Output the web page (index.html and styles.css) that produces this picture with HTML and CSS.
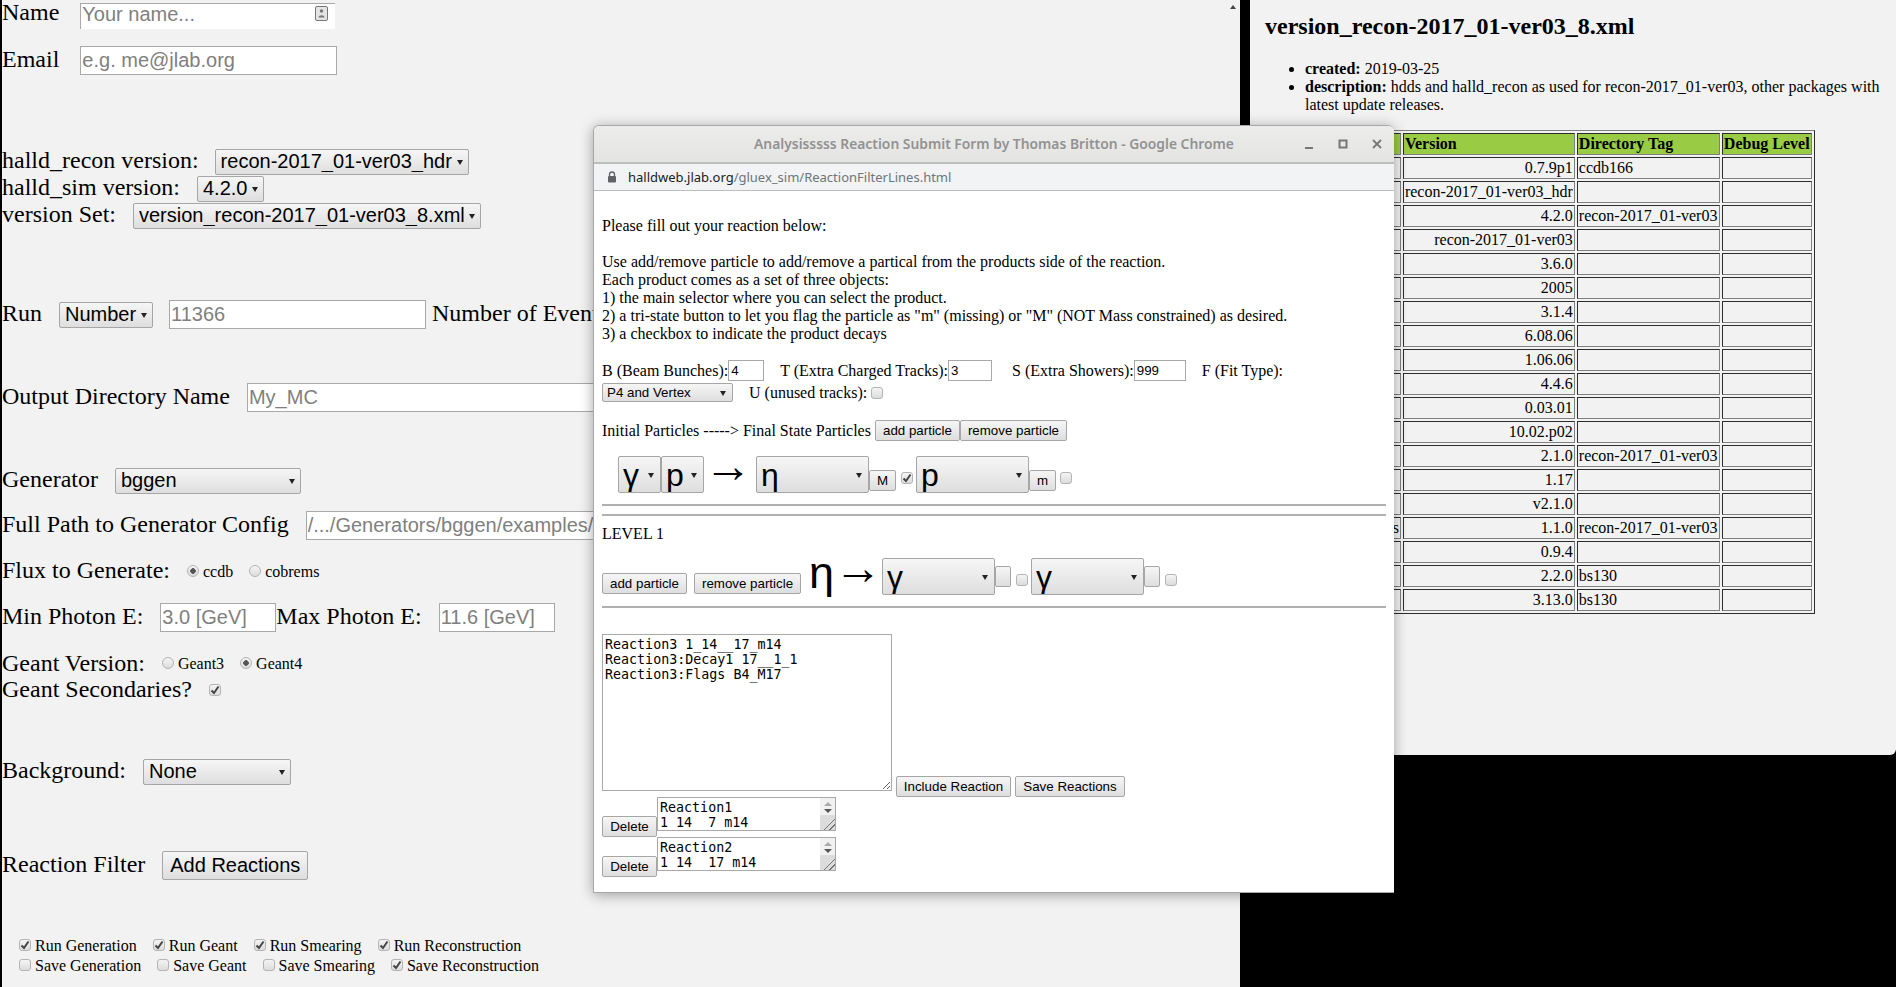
FILE: index.html
```html
<!DOCTYPE html>
<html lang="en">
<head>
    <meta charset="UTF-8">
    <title>MC Submit Form</title>
    <link rel="stylesheet" href="styles.css">
</head>
<body>
    <!-- Main submit form window -->
    <div class="win win-main">
        <div class="row">
            <label>Name&nbsp;&nbsp;&nbsp;</label>
            <div class="name-box ml-4">
                <input class="name-input" type="text" placeholder="Your name...">
                <svg class="contact-icon" width="13" height="15" viewBox="0 0 13 15"><rect x="0.5" y="0.5" width="12" height="14" rx="1.5" fill="#e4e4e4" stroke="#777"/><circle cx="6.5" cy="5" r="1.7" fill="#777"/><path d="M3.5 11.5 C3.5 8.5 9.5 8.5 9.5 11.5 Z" fill="#777"/></svg>
            </div>
        </div>
        <div class="row mt-20">
            <label>Email&nbsp;&nbsp;&nbsp;</label>
            <input class="text w-257 ml-4" type="text" placeholder="e.g. me@jlab.org">
        </div>

        <div class="row row-27 mt-73">
            <label>halld_recon version:&nbsp;&nbsp;&nbsp;</label>
            <select class="sel w-254 tuck"><option>recon-2017_01-ver03_hdr</option></select>
        </div>
        <div class="row row-27">
            <label>halld_sim version:&nbsp;&nbsp;&nbsp;</label>
            <select class="sel w-67"><option>4.2.0</option></select>
        </div>
        <div class="row row-27">
            <label>version Set:&nbsp;&nbsp;&nbsp;</label>
            <select class="sel w-348"><option>version_recon-2017_01-ver03_8.xml</option></select>
        </div>

        <div class="row mt-71">
            <label>Run&nbsp;&nbsp;&nbsp;</label>
            <select class="sel w-94"><option>Number</option></select>
            <input class="text w-257 ml-16" type="text" placeholder="11366">
            <label class="ml-6">Number of Events</label>
        </div>

        <div class="row mt-54">
            <label>Output Directory Name&nbsp;&nbsp;&nbsp;</label>
            <input class="text w-500" type="text" placeholder="My_MC">
        </div>

        <div class="row row-27 mt-55">
            <label>Generator&nbsp;&nbsp;&nbsp;</label>
            <select class="sel w-186"><option>bggen</option></select>
        </div>
        <div class="row mt-17">
            <label>Full Path to Generator Config&nbsp;&nbsp;&nbsp;</label>
            <input class="text w-500" type="text" placeholder="/.../Generators/bggen/examples/">
        </div>
        <div class="row row-27 mt-18">
            <label>Flux to Generate:&nbsp;&nbsp;&nbsp;</label>
            <label class="opt"><input class="radio" type="radio" name="flux" checked>ccdb</label>
            <label class="opt"><input class="radio" type="radio" name="flux">cobrems</label>
        </div>
        <div class="row mt-18">
            <label>Min Photon E:&nbsp;&nbsp;&nbsp;</label>
            <input class="text w-116" type="text" placeholder="3.0 [GeV]">
            <label>Max Photon E:&nbsp;&nbsp;&nbsp;</label>
            <input class="text w-116" type="text" placeholder="11.6 [GeV]">
        </div>
        <div class="row row-26 mt-19">
            <label>Geant Version:&nbsp;&nbsp;&nbsp;</label>
            <label class="opt"><input class="radio" type="radio" name="geant">Geant3</label>
            <label class="opt"><input class="radio" type="radio" name="geant" checked>Geant4</label>
        </div>
        <div class="row row-26">
            <label>Geant Secondaries?&nbsp;&nbsp;&nbsp;</label>
            <input class="check" type="checkbox" checked>
        </div>

        <div class="row row-27 mt-55">
            <label>Background:&nbsp;&nbsp;&nbsp;</label>
            <select class="sel w-148"><option>None</option></select>
        </div>

        <div class="row mt-66">
            <label>Reaction Filter&nbsp;&nbsp;&nbsp;</label>
            <button class="btn-big">Add Reactions</button>
        </div>

        <div class="row row-20 mt-56 ml-17">
            <label class="opt"><input class="check" type="checkbox" checked>Run Generation</label>
            <label class="opt"><input class="check" type="checkbox" checked>Run Geant</label>
            <label class="opt"><input class="check" type="checkbox" checked>Run Smearing</label>
            <label class="opt"><input class="check" type="checkbox" checked>Run Reconstruction</label>
        </div>
        <div class="row row-20 ml-17">
            <label class="opt"><input class="check" type="checkbox">Save Generation</label>
            <label class="opt"><input class="check" type="checkbox">Save Geant</label>
            <label class="opt"><input class="check" type="checkbox">Save Smearing</label>
            <label class="opt"><input class="check" type="checkbox" checked>Save Reconstruction</label>
        </div>
        <div class="scroll-up"></div>
    </div>

    <!-- Version set window -->
    <div class="win win-versions">
        <h2>version_recon-2017_01-ver03_8.xml</h2>
        <ul>
            <li><b>created:</b> 2019-03-25</li>
            <li><b>description:</b> hdds and halld_recon as used for recon-2017_01-ver03, other packages with latest update releases.</li>
        </ul>
        <table class="versions">
            <tr><th>Package</th><th>Version</th><th>Directory Tag</th><th>Debug Level</th></tr>
            <tr><td>jana</td><td class="num">0.7.9p1</td><td>ccdb166</td><td></td></tr>
            <tr><td>halld_recon</td><td class="num">recon-2017_01-ver03_hdr</td><td></td><td></td></tr>
            <tr><td>halld_sim</td><td class="num">4.2.0</td><td>recon-2017_01-ver03</td><td></td></tr>
            <tr><td>hdds</td><td class="num">recon-2017_01-ver03</td><td></td><td></td></tr>
            <tr><td>xerces-c</td><td class="num">3.6.0</td><td></td><td></td></tr>
            <tr><td>cernlib</td><td class="num">2005</td><td></td><td></td></tr>
            <tr><td>sqlitecpp</td><td class="num">3.1.4</td><td></td><td></td></tr>
            <tr><td>root</td><td class="num">6.08.06</td><td></td><td></td></tr>
            <tr><td>ccdb</td><td class="num">1.06.06</td><td></td><td></td></tr>
            <tr><td>evio</td><td class="num">4.4.6</td><td></td><td></td></tr>
            <tr><td>rcdb</td><td class="num">0.03.01</td><td></td><td></td></tr>
            <tr><td>geant4</td><td class="num">10.02.p02</td><td></td><td></td></tr>
            <tr><td>amptools</td><td class="num">2.1.0</td><td>recon-2017_01-ver03</td><td></td></tr>
            <tr><td>hepmc</td><td class="num">1.17</td><td></td><td></td></tr>
            <tr><td>photos</td><td class="num">v2.1.0</td><td></td><td></td></tr>
            <tr><td>gluex_root_analysis</td><td class="num">1.1.0</td><td>recon-2017_01-ver03</td><td></td></tr>
            <tr><td>lapack</td><td class="num">0.9.4</td><td></td><td></td></tr>
            <tr><td>gluex_mcwrapper</td><td class="num">2.2.0</td><td>bs130</td><td></td></tr>
            <tr><td>sqlite</td><td class="num">3.13.0</td><td>bs130</td><td></td></tr>
        </table>
    </div>

    <!-- Reaction popup window, sits over the other two -->
    <div class="win win-popup">
        <div class="titlebar">
            <span class="title">Analysisssss Reaction Submit Form by Thomas Britton - Google Chrome</span>
            <svg class="win-btn btn-min" width="10" height="10" viewBox="0 0 10 10"><rect x="0" y="8" width="8" height="2" fill="#777"/></svg>
            <svg class="win-btn btn-max" width="10" height="10" viewBox="0 0 10 10"><rect x="1.5" y="1.5" width="7" height="7" fill="none" stroke="#777" stroke-width="2"/></svg>
            <svg class="win-btn btn-close" width="10" height="10" viewBox="0 0 10 10"><path d="M1 1 L9 9 M9 1 L1 9" stroke="#777" stroke-width="1.8"/></svg>
        </div>
        <div class="urlbar">
            <svg class="lock" width="10" height="12" viewBox="0 0 10 12"><path d="M2.5 5 V3.5 a2.5 2.5 0 0 1 5 0 V5" fill="none" stroke="#5f6368" stroke-width="1.3"/><rect x="1" y="5" width="8" height="6.5" rx="1" fill="#5f6368"/></svg>
            <span class="host">halldweb.jlab.org</span><span class="path">/gluex_sim/ReactionFilterLines.html</span>
        </div>
        <div class="popup-body">
            <div class="intro">
                Please fill out your reaction below:<br><br>
                Use add/remove particle to add/remove a partical from the products side of the reaction.<br>
                Each product comes as a set of three objects:<br>
                1) the main selector where you can select the product.<br>
                2) a tri-state button to let you flag the particle as "m" (missing) or "M" (NOT Mass constrained) as desired.<br>
                3) a checkbox to indicate the product decays
            </div>

            <div class="line mt-17">
                <span>B (Beam Bunches):</span><input class="small w-36" type="text" value="4">
                <span class="ml-16">T (Extra Charged Tracks):</span><input class="small w-44" type="text" value="3">
                <span class="ml-20">S (Extra Showers):</span><input class="small w-52" type="text" value="999">
                <span class="ml-16">F (Fit Type):</span>
            </div>
            <div class="line line-p4 mt-2">
                <select class="sel sel-small w-131"><option>P4 and Vertex</option></select>
                <span class="ml-16">U (unused tracks):</span><input class="check ml-4" type="checkbox">
            </div>
            <div class="line mt-18">
                <span>Initial Particles -----&gt; Final State Particles</span>
                <button class="btn btn-add ml-4">add particle</button><button class="btn btn-remove">remove particle</button>
            </div>

            <div class="reaction mt-15 ml-16">
                <select class="sel sel-part w-43"><option>γ</option></select>
                <select class="sel sel-part w-43"><option>p</option></select>
                <span class="arrow">→</span>
                <select class="sel sel-part w-113"><option>η</option></select>
                <button class="btn btn-tri">M</button>
                <input class="check check-part ml-5" type="checkbox" checked>
                <select class="sel sel-part w-113 ml-3"><option>p</option></select>
                <button class="btn btn-tri">m</button>
                <input class="check check-part ml-4" type="checkbox">
            </div>
            <hr class="rule mt-11">
            <hr class="rule mt-8">
            <div class="intro mt-9">LEVEL 1</div>

            <div class="reaction mt-15">
                <button class="btn btn-add btn-level">add particle</button>
                <button class="btn btn-remove btn-level ml-7">remove particle</button>
                <span class="parent">η</span>
                <span class="arrow arrow-2">→</span>
                <select class="sel sel-part w-113"><option>γ</option></select>
                <button class="btn btn-flag"></button>
                <input class="check check-flag ml-5" type="checkbox">
                <select class="sel sel-part w-113 ml-3"><option>γ</option></select>
                <button class="btn btn-flag"></button>
                <input class="check check-flag ml-5" type="checkbox">
            </div>
            <hr class="rule mt-11">

            <div class="editor mt-26">
                <textarea class="mono main-area">Reaction3 1_14__17_m14
Reaction3:Decay1 17__1_1
Reaction3:Flags B4_M17</textarea>
                <button class="btn btn-edit w-115 ml-4">Include Reaction</button>
                <button class="btn btn-edit w-110 ml-4">Save Reactions</button>
            </div>

            <div class="saved mt-6">
                <button class="btn btn-delete">Delete</button>
                <div class="mini">
                    <textarea class="mono mini-area">Reaction1
1_14__7_m14</textarea>
                    <div class="mini-bar"><i class="up"></i><i class="down"></i><span class="grip"></span></div>
                </div>
            </div>
            <div class="saved">
                <button class="btn btn-delete">Delete</button>
                <div class="mini">
                    <textarea class="mono mini-area">Reaction2
1_14__17_m14</textarea>
                    <div class="mini-bar"><i class="up"></i><i class="down"></i><span class="grip"></span></div>
                </div>
            </div>
        </div>
    </div>
</body>
</html>
```

FILE: styles.css
```css
html, body {
    margin: 0;
    height: 100%;
    overflow: hidden;
    background-color: #000;
}

body {
    position: relative;
    font-family: "Liberation Serif", serif;
    font-size: 16px;
    color: #000;
}

/* windows on the desktop */
.win {
    position: absolute;
    box-sizing: border-box;
    overflow: hidden;
    background-color: #f2f2f2;
}

.win-main {
    left: 2px;
    top: 0;
    width: 1238px;
    height: 987px;
}

.win-versions {
    left: 1250px;
    top: 0;
    width: 646px;
    height: 755px;
    padding-left: 15px;
    border-bottom-right-radius: 6px;
}

.win-popup {
    left: 593px;
    top: 125px;
    width: 801px;
    height: 768px;
    background-color: #fff;
    border: 1px solid #a8a8a8;
    border-right: 0;
    border-radius: 6px 6px 0 0;
    box-shadow: 0 2px 14px rgba(0, 0, 0, 0.35);
}

/* main form rows */
.row {
    display: flex;
    align-items: center;
    height: 29px;
    font-size: 24px;
    line-height: 27px;
    white-space: nowrap;
}

.row > label:not(.opt) {
    margin-right: -1px;
    margin-bottom: 2px;
}

.row-20 { height: 20px; }
.row-26 { height: 26px; }
.row-27 { height: 27px; }
.row:first-child { height: 26px; }

.opt {
    display: inline-flex;
    align-items: center;
    font-size: 16px;
    line-height: 18px;
    margin-right: 16px;
}

.opt input {
    margin-bottom: 2px;
}

.text {
    box-sizing: border-box;
    height: 29px;
    padding: 0 1px;
    border: 1px solid #a9a9a9;
    background-color: #fff;
    font-family: "Liberation Sans", sans-serif;
    font-size: 20px;
}

::placeholder {
    color: #808080;
    opacity: 1;
}

.name-box {
    position: relative;
    width: 255px;
    height: 26px;
}

.name-input {
    box-sizing: border-box;
    width: 100%;
    height: 26px;
    padding: 0 1px 3px;
    border: 0;
    border-top: 1px solid #a9a9a9;
    border-left: 1px solid #a9a9a9;
    background-color: #fff;
    font-family: "Liberation Sans", sans-serif;
    font-size: 20px;
}

.contact-icon {
    position: absolute;
    right: 7px;
    top: 6px;
}

.sel {
    appearance: none;
    box-sizing: border-box;
    height: 26px;
    padding: 0 0 2px 5px;
    border: 1px solid #a6a6a6;
    border-radius: 2px;
    color: #000;
    font-family: "Liberation Sans", sans-serif;
    font-size: 20px;
    background-color: #e8e8e8;
    background-image:
        url("data:image/svg+xml,%3Csvg xmlns='http://www.w3.org/2000/svg' width='6' height='6'%3E%3Cpath d='M0 1h6L3 6z' fill='%23222'/%3E%3C/svg%3E"),
        linear-gradient(#f6f6f6, #dedede);
    background-repeat: no-repeat;
    background-position: right 5px center, 0 0;
}

.tuck { margin-left: -1px; }

.sel-small {
    height: 19px;
    padding: 0 0 0 4px;
    font-size: 13.33px;
    background-position: right 6px center, 0 0;
}

.sel-part {
    height: 37px;
    padding: 0 0 0 4px;
    font-size: 32px;
    background-position: right 6px center, 0 0;
}

.btn-big {
    box-sizing: border-box;
    width: 146px;
    height: 29px;
    padding: 0;
    border: 1px solid #a6a6a6;
    border-radius: 2px;
    background: linear-gradient(#f6f6f6, #dedede);
    color: #000;
    font-family: "Liberation Sans", sans-serif;
    font-size: 20px;
}

.check,
.radio {
    appearance: none;
    box-sizing: border-box;
    flex: none;
    width: 12px;
    height: 12px;
    margin: 0 4px 0 0;
    border: 1px solid #b4b4b4;
    background-color: #e6e6e6;
    background-repeat: no-repeat;
    background-position: center;
}

.check {
    border-radius: 3px;
    background-image: linear-gradient(#f4f4f4, #dcdcdc);
}

.check:checked {
    background-image:
        url("data:image/svg+xml,%3Csvg xmlns='http://www.w3.org/2000/svg' width='10' height='10'%3E%3Cpath d='M1.5 5.5L4 8L8.5 1.5' fill='none' stroke='%23444' stroke-width='2'/%3E%3C/svg%3E"),
        linear-gradient(#f4f4f4, #dcdcdc);
}

.radio {
    border-radius: 50%;
    background-image: linear-gradient(#f4f4f4, #dcdcdc);
}

.radio:checked {
    background-image: radial-gradient(circle, #555 0, #555 2.5px, transparent 3px), linear-gradient(#f4f4f4, #dcdcdc);
}

.scroll-up {
    position: absolute;
    left: 1228px;
    top: 5px;
    border-left: 3px solid transparent;
    border-right: 3px solid transparent;
    border-bottom: 4px solid #444;
}

/* sizes and gaps */
.w-36 { width: 36px; }
.w-43 { width: 43px; }
.w-44 { width: 44px; }
.w-52 { width: 52px; }
.w-67 { width: 67px; }
.w-94 { width: 94px; }
.w-110 { width: 110px; }
.w-113 { width: 113px; }
.w-115 { width: 115px; }
.w-116 { width: 116px; }
.w-131 { width: 131px; }
.w-148 { width: 148px; }
.w-186 { width: 186px; }
.w-254 { width: 254px; }
.w-257 { width: 257px; }
.w-348 { width: 348px; }
.w-500 { width: 500px; flex: none; }

.mt-2 { margin-top: 2px; }
.mt-6 { margin-top: 6px; }
.mt-8 { margin-top: 8px; }
.mt-9 { margin-top: 9px; }
.mt-11 { margin-top: 11px; }
.mt-15 { margin-top: 15px; }
.mt-17 { margin-top: 17px; }
.mt-18 { margin-top: 18px; }
.mt-19 { margin-top: 19px; }
.mt-20 { margin-top: 20px; }
.mt-26 { margin-top: 26px; }
.mt-54 { margin-top: 54px; }
.mt-55 { margin-top: 55px; }
.mt-56 { margin-top: 56px; }
.mt-66 { margin-top: 66px; }
.mt-71 { margin-top: 71px; }
.mt-73 { margin-top: 73px; }

.ml-3 { margin-left: 3px; }
.ml-4 { margin-left: 4px; }
.ml-5 { margin-left: 5px; }
.ml-6 { margin-left: 6px; }
.ml-7 { margin-left: 7px; }
.ml-16 { margin-left: 16px; }
.ml-17 { margin-left: 17px; }
.ml-20 { margin-left: 20px; }

/* versions window */
h2 {
    margin: 13px 0 20px;
    font-size: 24px;
    line-height: 27px;
}

ul {
    margin: 0 0 16px;
    padding-left: 40px;
    line-height: 18px;
}

.versions {
    border: 1px outset #808080;
    border-spacing: 2px;
    background-color: #f2f2f2;
}

.versions th,
.versions td {
    padding: 1px;
    height: 18px;
    line-height: 18px;
    border: 1px inset #808080;
    white-space: nowrap;
    text-align: left;
}

.versions th {
    background-color: #99cc44;
}

.versions th:nth-child(3) {
    width: 139px;
}

.versions td.num {
    text-align: right;
}

/* popup chrome */
.titlebar {
    position: relative;
    box-sizing: border-box;
    height: 38px;
    background: linear-gradient(#ececeb, #e4e4e2);
    border-bottom: 2px solid #bdbdbd;
    text-align: center;
}

.title {
    font-family: "Noto Sans", sans-serif;
    font-size: 13.85px;
    font-weight: 600;
    line-height: 36px;
    color: #929292;
}

.win-btn {
    position: absolute;
    top: 13px;
}

.btn-min { left: 711px; }
.btn-max { left: 744px; }
.btn-close { left: 778px; }

.urlbar {
    display: flex;
    align-items: center;
    box-sizing: border-box;
    height: 27px;
    padding-left: 13px;
    background-color: #f1f3f4;
    border-bottom: 1px solid #bdbdbd;
    font-family: "Noto Sans", sans-serif;
    font-size: 13px;
}

.lock { margin-right: 11px; }
.host { color: #202124; }
.path { color: #70757a; }

/* popup content */
.popup-body {
    padding: 26px 8px 0;
}

.intro {
    line-height: 18px;
}

.line {
    display: flex;
    align-items: center;
    height: 21px;
    line-height: 18px;
    white-space: nowrap;
}

.line-p4 { height: 19px; }

.small {
    box-sizing: border-box;
    height: 21px;
    padding: 0 2px;
    border: 1px solid #a9a9a9;
    font-family: "Liberation Sans", sans-serif;
    font-size: 13.33px;
}

.btn {
    box-sizing: border-box;
    height: 21px;
    padding: 0;
    border: 1px solid #a6a6a6;
    border-radius: 2px;
    background: linear-gradient(#f6f6f6, #dedede);
    color: #000;
    font-family: "Liberation Sans", sans-serif;
    font-size: 13.33px;
}

.btn-add { width: 85px; }
.btn-remove { width: 107px; }

.reaction {
    display: flex;
    align-items: flex-start;
    height: 37px;
}

.arrow {
    width: 48px;
    margin: -14px 4px 0 0;
    font-family: "Liberation Serif", serif;
    font-size: 48px;
    line-height: 48px;
    text-align: center;
}

.arrow-2 { margin: -14px 0 0 1px; }

.parent {
    width: 24px;
    margin: -4px 0 0 8px;
    font-family: "Liberation Sans", sans-serif;
    font-size: 45px;
    line-height: 37px;
}

.btn-tri {
    width: 27px;
    margin-top: 14px;
}

.btn-flag {
    width: 16px;
    margin-top: 8px;
}

.btn-level { margin-top: 15px; }

.check-part,
.check-flag,
.line .check { margin-right: 0; }

.check-part { margin-top: 16px; }
.check-flag { margin-top: 16px; }

.rule {
    height: 0;
    margin-bottom: 0;
    margin-left: 0;
    margin-right: 0;
    border: 0;
    border-top: 2px solid #b0b0b0;
}

.mono {
    box-sizing: border-box;
    font-family: "DejaVu Sans Mono", monospace;
    font-size: 13.33px;
    line-height: 15px;
    color: #000;
    border: 1px solid #a9a9a9;
}

.editor {
    display: flex;
    align-items: flex-end;
    height: 157px;
}

.main-area {
    width: 290px;
    height: 157px;
    margin: 0;
    padding: 2px;
}

.btn-edit {
    margin-bottom: -6px;
}

.saved {
    display: flex;
    align-items: flex-start;
    height: 40px;
}

.btn-delete {
    width: 55px;
    margin-top: 19px;
}

.mini {
    position: relative;
    width: 179px;
    height: 34px;
}

.mini-area {
    display: block;
    width: 179px;
    height: 34px;
    margin: 0;
    padding: 2px;
    overflow: hidden;
    resize: none;
}

/* scrollbar drawn over the small textareas */
.mini-bar {
    position: absolute;
    right: 1px;
    top: 1px;
    width: 15px;
    height: 32px;
    background-color: #f1f1f1;
}

.mini-bar .up,
.mini-bar .down {
    position: absolute;
    left: 4px;
    border-left: 4px solid transparent;
    border-right: 4px solid transparent;
}

.mini-bar .up {
    top: 4px;
    border-bottom: 4px solid #aaa;
}

.mini-bar .down {
    top: 11px;
    border-top: 4px solid #555;
}

.grip {
    position: absolute;
    left: 0;
    bottom: 0;
    width: 15px;
    height: 15px;
    background:
        linear-gradient(135deg, transparent 60%, #777 60%, #777 66%, transparent 66%, transparent 78%, #777 78%, #777 84%, transparent 84%),
        #dcdcdc;
}
```
